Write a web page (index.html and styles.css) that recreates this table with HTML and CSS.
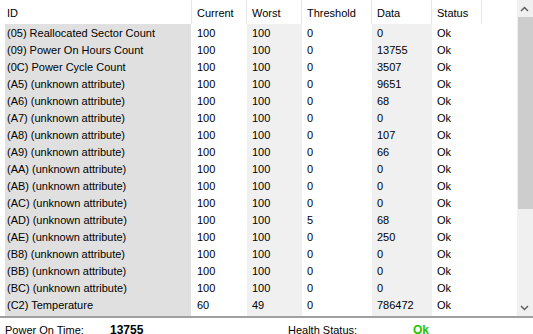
FILE: index.html
```html
<!DOCTYPE html>
<html>
<head>
<meta charset="utf-8">
<link rel="stylesheet" href="styles.css">
</head>
<body>
<div class="window">
  <div class="list">
    <div class="table">
      <div class="row head">
        <div class="c id">ID</div><div class="c">Current</div><div class="c">Worst</div><div class="c">Threshold</div><div class="c">Data</div><div class="c">Status</div><div class="c last"></div>
      </div>
      <div class="row"><div class="c id">(05) Reallocated Sector Count</div><div class="c">100</div><div class="c alt">100</div><div class="c">0</div><div class="c alt">0</div><div class="c">Ok</div><div class="c"></div></div>
      <div class="row"><div class="c id">(09) Power On Hours Count</div><div class="c">100</div><div class="c alt">100</div><div class="c">0</div><div class="c alt">13755</div><div class="c">Ok</div><div class="c"></div></div>
      <div class="row"><div class="c id">(0C) Power Cycle Count</div><div class="c">100</div><div class="c alt">100</div><div class="c">0</div><div class="c alt">3507</div><div class="c">Ok</div><div class="c"></div></div>
      <div class="row"><div class="c id">(A5) (unknown attribute)</div><div class="c">100</div><div class="c alt">100</div><div class="c">0</div><div class="c alt">9651</div><div class="c">Ok</div><div class="c"></div></div>
      <div class="row"><div class="c id">(A6) (unknown attribute)</div><div class="c">100</div><div class="c alt">100</div><div class="c">0</div><div class="c alt">68</div><div class="c">Ok</div><div class="c"></div></div>
      <div class="row"><div class="c id">(A7) (unknown attribute)</div><div class="c">100</div><div class="c alt">100</div><div class="c">0</div><div class="c alt">0</div><div class="c">Ok</div><div class="c"></div></div>
      <div class="row"><div class="c id">(A8) (unknown attribute)</div><div class="c">100</div><div class="c alt">100</div><div class="c">0</div><div class="c alt">107</div><div class="c">Ok</div><div class="c"></div></div>
      <div class="row"><div class="c id">(A9) (unknown attribute)</div><div class="c">100</div><div class="c alt">100</div><div class="c">0</div><div class="c alt">66</div><div class="c">Ok</div><div class="c"></div></div>
      <div class="row"><div class="c id">(AA) (unknown attribute)</div><div class="c">100</div><div class="c alt">100</div><div class="c">0</div><div class="c alt">0</div><div class="c">Ok</div><div class="c"></div></div>
      <div class="row"><div class="c id">(AB) (unknown attribute)</div><div class="c">100</div><div class="c alt">100</div><div class="c">0</div><div class="c alt">0</div><div class="c">Ok</div><div class="c"></div></div>
      <div class="row"><div class="c id">(AC) (unknown attribute)</div><div class="c">100</div><div class="c alt">100</div><div class="c">0</div><div class="c alt">0</div><div class="c">Ok</div><div class="c"></div></div>
      <div class="row"><div class="c id">(AD) (unknown attribute)</div><div class="c">100</div><div class="c alt">100</div><div class="c">5</div><div class="c alt">68</div><div class="c">Ok</div><div class="c"></div></div>
      <div class="row"><div class="c id">(AE) (unknown attribute)</div><div class="c">100</div><div class="c alt">100</div><div class="c">0</div><div class="c alt">250</div><div class="c">Ok</div><div class="c"></div></div>
      <div class="row"><div class="c id">(B8) (unknown attribute)</div><div class="c">100</div><div class="c alt">100</div><div class="c">0</div><div class="c alt">0</div><div class="c">Ok</div><div class="c"></div></div>
      <div class="row"><div class="c id">(BB) (unknown attribute)</div><div class="c">100</div><div class="c alt">100</div><div class="c">0</div><div class="c alt">0</div><div class="c">Ok</div><div class="c"></div></div>
      <div class="row"><div class="c id">(BC) (unknown attribute)</div><div class="c">100</div><div class="c alt">100</div><div class="c">0</div><div class="c alt">0</div><div class="c">Ok</div><div class="c"></div></div>
      <div class="row"><div class="c id">(C2) Temperature</div><div class="c">60</div><div class="c alt">49</div><div class="c">0</div><div class="c alt">786472</div><div class="c">Ok</div><div class="c"></div></div>
      <div class="row"><div class="c id"></div><div class="c"></div><div class="c alt"></div><div class="c"></div><div class="c alt"></div><div class="c"></div><div class="c"></div></div>
    </div>
    <div class="scrollbar">
      <div class="btn"><svg width="9" height="6" viewBox="0 0 9 6"><path d="M1 5 L4.5 1.5 L8 5" fill="none" stroke="#606060" stroke-width="1.5"/></svg></div>
      <div class="track"><div class="thumb"></div></div>
      <div class="btn"><svg width="9" height="6" viewBox="0 0 9 6"><path d="M1 1 L4.5 4.5 L8 1" fill="none" stroke="#606060" stroke-width="1.5"/></svg></div>
    </div>
  </div>
  <div class="footer">
    <div class="lbl">Power On Time:</div>
    <div class="val">13755</div>
    <div class="lbl">Health Status:</div>
    <div class="val ok">Ok</div>
  </div>
</div>
</body>
</html>
```
FILE: styles.css
```css
html, body {
  margin: 0;
  padding: 0;
  background: #ffffff;
}
.window {
  width: 533px;
  height: 334px;
  overflow: hidden;
  font-family: "Liberation Sans", Arial, sans-serif;
  font-size: 11px;
  color: #000;
  background: #fff;
}
.list {
  display: flex;
  height: 316px;
  border-bottom: 2px solid #a0a0a0;
  overflow: hidden;
}
.table {
  width: 517px;
  flex: none;
  overflow: hidden;
}
.row {
  display: grid;
  grid-template-columns: 192px 55px 55px 70px 60px 50px 35px;
  height: 17px;
}
.c {
  padding: 1px 0 0 5px;
  line-height: 16px;
  white-space: nowrap;
  overflow: hidden;
}
.c.id {
  border-left: 5px solid #fff;
  border-right: 1px solid #fff;
  background: #e0e0e0;
  padding-left: 2px;
}
.c.alt {
  background: #f0f0f0;
}
.row.head {
  height: 24px;
}
.row.head .c {
  background: #fff;
  padding-top: 7px;
  line-height: 13px;
  border-right: 1px solid #e5e5e5;
}
.row.head .c.id {
  border-left: 5px solid #fff;
  padding-left: 2px;
}
.row.head .c.last {
  border-right: none;
}
.scrollbar {
  flex: none;
  width: 17px;
  height: 316px;
  background: #f0f0f0;
  display: flex;
  flex-direction: column;
}
.btn {
  height: 17px;
  display: flex;
  align-items: center;
  justify-content: center;
  padding-right: 2px;
}
.track {
  flex: 1;
  padding: 0 1px 0 1px;
}
.thumb {
  height: 192px;
  background: #cdcdcd;
}
.footer {
  display: grid;
  grid-template-columns: 105px 178px 125px auto;
  padding: 6px 0 0 5px;
  line-height: 13px;
}
.val {
  font-weight: bold;
  font-size: 12px;
}
.ok {
  color: #22c400;
}
```
